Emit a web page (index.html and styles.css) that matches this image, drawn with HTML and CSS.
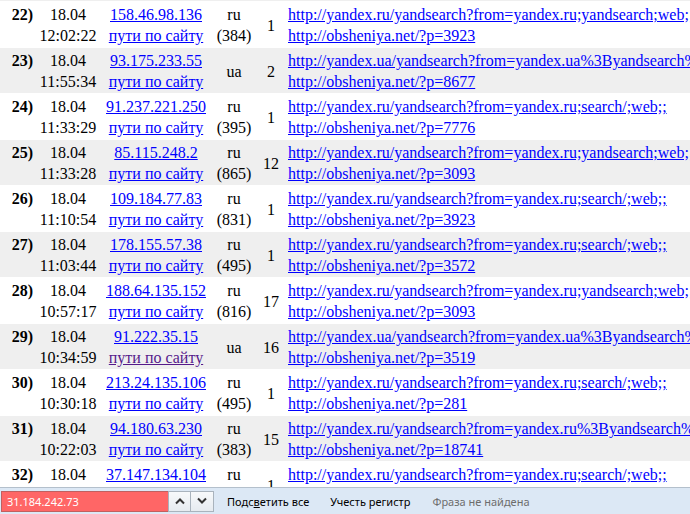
FILE: index.html
```html
<!DOCTYPE html>
<html>
<head>
    <title>Переходы</title>
    <link rel="stylesheet" href="styles.css">
</head>
<body>
    <table class="log">
        <colgroup>
            <col class="c-num"><col class="c-date"><col class="c-ip"><col class="c-geo"><col class="c-cnt"><col class="c-refs">
        </colgroup>
        <tr class="odd">
            <td class="num">21)</td><td class="date">18.04<br>12:10:05</td>
            <td class="ip"><a href="#">46.39.228.77</a><br><a href="#">пути по сайту</a></td>
            <td class="geo">ru<br>(812)</td><td class="cnt">1</td>
            <td class="refs"><a href="#">http://yandex.ru/yandsearch?from=yandex.ru;search/;web;;</a><br><a href="#">http://obsheniya.net/?p=3093</a></td>
        </tr>
        <tr>
            <td class="num">22)</td><td class="date">18.04<br>12:02:22</td>
            <td class="ip"><a href="#">158.46.98.136</a><br><a href="#">пути по сайту</a></td>
            <td class="geo">ru<br>(384)</td><td class="cnt">1</td>
            <td class="refs"><a href="#">http://yandex.ru/yandsearch?from=yandex.ru;yandsearch;web;;&amp;text=</a><br><a href="#">http://obsheniya.net/?p=3923</a></td>
        </tr>
        <tr class="odd">
            <td class="num">23)</td><td class="date">18.04<br>11:55:34</td>
            <td class="ip"><a href="#">93.175.233.55</a><br><a href="#">пути по сайту</a></td>
            <td class="geo">ua</td><td class="cnt">2</td>
            <td class="refs"><a href="#">http://yandex.ua/yandsearch?from=yandex.ua%3Byandsearch%3Bweb</a><br><a href="#">http://obsheniya.net/?p=8677</a></td>
        </tr>
        <tr>
            <td class="num">24)</td><td class="date">18.04<br>11:33:29</td>
            <td class="ip"><a href="#">91.237.221.250</a><br><a href="#">пути по сайту</a></td>
            <td class="geo">ru<br>(395)</td><td class="cnt">1</td>
            <td class="refs"><a href="#">http://yandex.ru/yandsearch?from=yandex.ru;search/;web;;</a><br><a href="#">http://obsheniya.net/?p=7776</a></td>
        </tr>
        <tr class="odd">
            <td class="num">25)</td><td class="date">18.04<br>11:33:28</td>
            <td class="ip"><a href="#">85.115.248.2</a><br><a href="#">пути по сайту</a></td>
            <td class="geo">ru<br>(865)</td><td class="cnt">12</td>
            <td class="refs"><a href="#">http://yandex.ru/yandsearch?from=yandex.ru;yandsearch;web;;&amp;text=</a><br><a href="#">http://obsheniya.net/?p=3093</a></td>
        </tr>
        <tr>
            <td class="num">26)</td><td class="date">18.04<br>11:10:54</td>
            <td class="ip"><a href="#">109.184.77.83</a><br><a href="#">пути по сайту</a></td>
            <td class="geo">ru<br>(831)</td><td class="cnt">1</td>
            <td class="refs"><a href="#">http://yandex.ru/yandsearch?from=yandex.ru;search/;web;;</a><br><a href="#">http://obsheniya.net/?p=3923</a></td>
        </tr>
        <tr class="odd">
            <td class="num">27)</td><td class="date">18.04<br>11:03:44</td>
            <td class="ip"><a href="#">178.155.57.38</a><br><a href="#">пути по сайту</a></td>
            <td class="geo">ru<br>(495)</td><td class="cnt">1</td>
            <td class="refs"><a href="#">http://yandex.ru/yandsearch?from=yandex.ru;search/;web;;</a><br><a href="#">http://obsheniya.net/?p=3572</a></td>
        </tr>
        <tr>
            <td class="num">28)</td><td class="date">18.04<br>10:57:17</td>
            <td class="ip"><a href="#">188.64.135.152</a><br><a href="#">пути по сайту</a></td>
            <td class="geo">ru<br>(816)</td><td class="cnt">17</td>
            <td class="refs"><a href="#">http://yandex.ru/yandsearch?from=yandex.ru;yandsearch;web;;&amp;text=</a><br><a href="#">http://obsheniya.net/?p=3093</a></td>
        </tr>
        <tr class="odd">
            <td class="num">29)</td><td class="date">18.04<br>10:34:59</td>
            <td class="ip"><a href="#">91.222.35.15</a><br><a href="#" class="visited">пути по сайту</a></td>
            <td class="geo">ua</td><td class="cnt">16</td>
            <td class="refs"><a href="#">http://yandex.ua/yandsearch?from=yandex.ua%3Byandsearch%3Bweb</a><br><a href="#">http://obsheniya.net/?p=3519</a></td>
        </tr>
        <tr>
            <td class="num">30)</td><td class="date">18.04<br>10:30:18</td>
            <td class="ip"><a href="#">213.24.135.106</a><br><a href="#">пути по сайту</a></td>
            <td class="geo">ru<br>(495)</td><td class="cnt">1</td>
            <td class="refs"><a href="#">http://yandex.ru/yandsearch?from=yandex.ru;search/;web;;</a><br><a href="#">http://obsheniya.net/?p=281</a></td>
        </tr>
        <tr class="odd">
            <td class="num">31)</td><td class="date">18.04<br>10:22:03</td>
            <td class="ip"><a href="#">94.180.63.230</a><br><a href="#">пути по сайту</a></td>
            <td class="geo">ru<br>(383)</td><td class="cnt">15</td>
            <td class="refs"><a href="#">http://yandex.ru/yandsearch?from=yandex.ru%3Byandsearch%3Bweb</a><br><a href="#">http://obsheniya.net/?p=18741</a></td>
        </tr>
        <tr>
            <td class="num">32)</td><td class="date">18.04<br>10:15:40</td>
            <td class="ip"><a href="#">37.147.134.104</a><br><a href="#">пути по сайту</a></td>
            <td class="geo">ru<br>(499)</td><td class="cnt">1</td>
            <td class="refs"><a href="#">http://yandex.ru/yandsearch?from=yandex.ru;search/;web;;</a><br><a href="#">http://obsheniya.net/?p=5521</a></td>
        </tr>
    </table>

    <div class="findbar">
        <div class="find-field notfound">31.184.242.73</div>
        <button class="find-btn" title="Предыдущее">
            <svg width="12" height="8" viewBox="0 0 12 8"><path d="M2 6.5 L6 2.5 L10 6.5" fill="none" stroke="#333" stroke-width="2"/></svg>
        </button>
        <button class="find-btn" title="Следующее">
            <svg width="12" height="8" viewBox="0 0 12 8"><path d="M2 1.5 L6 5.5 L10 1.5" fill="none" stroke="#333" stroke-width="2"/></svg>
        </button>
        <span class="find-opt">Подс<u>в</u>етить все</span>
        <span class="find-opt">Учесть регистр</span>
        <span class="find-status">Фраза не найдена</span>
    </div>
</body>
</html>
```

FILE: styles.css
```css
html, body { margin: 0; padding: 0; overflow: hidden; background: #fff; }
body { font-family: "Liberation Serif", "Times New Roman", serif; font-size: 16px; color: #000; height: 514px; }

.log { border-collapse: separate; border-spacing: 0 1px; table-layout: fixed; width: 900px; margin-top: -45px; }
.log td { padding: 2px 0 1px 0; line-height: 21px; vertical-align: middle; white-space: nowrap; overflow: hidden; }
.log tr.odd td { background: #efefef; }
.log a { color: #0000ff; }
.log a.visited { color: #551a8b; }

.c-num { width: 38px; }
.c-date { width: 60px; }
.c-ip { width: 116px; }
.c-geo { width: 40px; }
.c-cnt { width: 34px; }
.c-refs { width: 612px; }

.log td.num { text-align: right; padding-right: 5px; font-weight: bold; vertical-align: top; }
.date, .ip, .geo, .cnt { text-align: center; }

.findbar { position: fixed; left: 0; right: 0; bottom: 0; height: 26px; background: #dce8f5; border-top: 1px solid #b4c0cc; display: flex; align-items: center; font-family: "Noto Sans", "Open Sans", sans-serif; font-size: 11px; color: #000; }
.find-field { width: 161px; height: 19px; line-height: 19px; margin-left: 1px; padding-left: 5px; border: 1px solid #c06060; border-right: none; color: #fff; }
.find-field.notfound { background: #ff6666; }
.find-btn { width: 23px; height: 21px; margin: 0; padding: 0; border: 1px solid #a9b3bd; background: linear-gradient(#f7f9fb, #e6ebf0); display: flex; align-items: center; justify-content: center; }
.find-btn + .find-btn { border-left: none; }
.find-opt { margin-left: 13px; margin-right: 6px; }
.find-opt + .find-opt { margin-left: 15px; }
.find-status { margin-left: 16px; color: #6d6d6d; }
```
